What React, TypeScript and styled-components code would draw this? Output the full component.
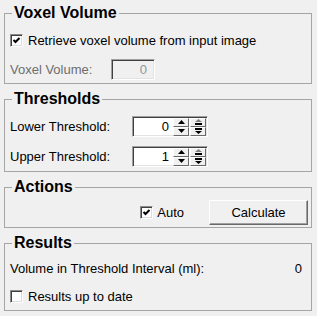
import React from "react";
import styled, { createGlobalStyle } from "styled-components";

const GlobalStyle = createGlobalStyle`
  body {
    margin: 0;
    background: #f0f0f0;
    font-family: "Liberation Sans", Arial, sans-serif;
    font-size: 13px;
    color: #000;
  }
`;

const Panel = styled.div`
  width: 308px;
  padding: 4px 0 0 4px;
  display: flex;
  flex-direction: column;
  gap: 6px;
`;

const Group = styled.fieldset`
  margin: 0;
  padding: 0 3px 0 5px;
  border: 1px solid #a5a5a5;
  min-width: 0;
`;

const Legend = styled.legend`
  margin-left: 2px;
  padding: 0 2px;
  font-weight: bold;
  font-size: 16px;
  line-height: 18px;
`;

const Body = styled.div<{ $top: number; $bottom: number; $gap: number }>`
  display: flex;
  flex-direction: column;
  padding-top: ${(p) => p.$top}px;
  padding-bottom: ${(p) => p.$bottom}px;
  gap: ${(p) => p.$gap}px;
`;

const Row = styled.div<{ $h?: number; $end?: boolean; $right?: number }>`
  display: flex;
  align-items: center;
  height: ${(p) => p.$h ?? 20}px;
  justify-content: ${(p) => (p.$end ? "flex-end" : "flex-start")};
  padding-right: ${(p) => p.$right ?? 0}px;
`;

const Label = styled.span<{ $w?: number; $disabled?: boolean }>`
  width: ${(p) => (p.$w ? `${p.$w}px` : "auto")};
  flex: ${(p) => (p.$w ? "none" : "1")};
  color: ${(p) => (p.$disabled ? "#6d6d6d" : "#000")};
  white-space: nowrap;
`;

const CheckLabel = styled.label<{ $gap?: number }>`
  display: flex;
  align-items: center;
  gap: ${(p) => p.$gap ?? 5}px;
  white-space: nowrap;
`;

const Box = styled.span`
  box-sizing: border-box;
  width: 13px;
  height: 13px;
  background: #fff;
  border: 1px solid;
  border-color: #8a8a8a #fff #fff #8a8a8a;
  box-shadow: inset 1px 1px 0 #404040, inset -1px -1px 0 #dcdcdc;
  display: flex;
  align-items: center;
  justify-content: center;
`;

const CheckBox = ({ checked }: { checked?: boolean }) => (
  <Box>
    {checked && (
      <svg width="9" height="9" viewBox="0 0 9 9">
        <path d="M1.5 4 L3.5 6 L7.5 2" stroke="#000" strokeWidth="2" fill="none" />
      </svg>
    )}
  </Box>
);

const Field = styled.div<{ $w: number; $disabled?: boolean }>`
  box-sizing: border-box;
  width: ${(p) => p.$w}px;
  height: 21px;
  border: 1px solid;
  border-color: #a0a0a0 #fff #fff #a0a0a0;
  box-shadow: inset 1px 1px 0 #404040, inset -1px -1px 0 #e3e3e3;
  background: ${(p) => (p.$disabled ? "#f0f0f0" : "#fff")};
  display: flex;
  align-items: center;
`;

const FieldText = styled.span<{ $disabled?: boolean }>`
  flex: 1;
  text-align: right;
  padding-right: ${(p) => (p.$disabled ? 7 : 4)}px;
  color: ${(p) => (p.$disabled ? "#8d95a0" : "#000")};
`;

const SpinCol = styled.div`
  display: flex;
  flex-direction: column;
  width: 16px;
  margin-right: 1px;
`;

const SpinHalf = styled.div`
  box-sizing: border-box;
  height: 9px;
  background: #f0f0f0;
  border: 1px solid;
  border-color: #fff #696969 #696969 #fff;
  display: flex;
  align-items: center;
  justify-content: center;
`;

const Arrow = ({ dir }: { dir: "up" | "down" }) => (
  <svg width="7" height="4" viewBox="0 0 7 4">
    {dir === "up" ? <path d="M3.5 0 L7 4 L0 4 Z" fill="#000" /> : <path d="M0 0 L7 0 L3.5 4 Z" fill="#000" />}
  </svg>
);

const FastArrow = ({ dir }: { dir: "up" | "down" }) => (
  <svg width="7" height="6" viewBox="0 0 7 6">
    {dir === "up" ? (
      <>
        <path d="M3.5 0 L7 3 L0 3 Z" fill="#808080" />
        <rect x="0" y="4" width="7" height="2" fill="#000" />
      </>
    ) : (
      <>
        <rect x="0" y="0" width="7" height="2" fill="#000" />
        <path d="M0 3 L7 3 L3.5 6 Z" fill="#000" />
      </>
    )}
  </svg>
);

const SpinBox = ({ value }: { value: string }) => (
  <Field $w={76}>
    <FieldText>{value}</FieldText>
    <SpinCol>
      <SpinHalf>
        <Arrow dir="up" />
      </SpinHalf>
      <SpinHalf>
        <Arrow dir="down" />
      </SpinHalf>
    </SpinCol>
    <SpinCol>
      <SpinHalf>
        <FastArrow dir="up" />
      </SpinHalf>
      <SpinHalf>
        <FastArrow dir="down" />
      </SpinHalf>
    </SpinCol>
  </Field>
);

const Button = styled.button`
  box-sizing: border-box;
  width: 99px;
  height: 25px;
  margin-left: 25px;
  font-family: inherit;
  font-size: 13px;
  color: #000;
  background: #f0f0f0;
  border: 1px solid;
  border-color: #fff #696969 #696969 #fff;
  box-shadow: inset -1px -1px 0 #a0a0a0;
  padding: 0;
`;

export default function App() {
  return (
    <>
      <GlobalStyle />
      <Panel>
        <Group>
          <Legend>Voxel Volume</Legend>
          <Body $top={8} $bottom={3} $gap={8}>
            <Row>
              <CheckLabel>
                <CheckBox checked />
                Retrieve voxel volume from input image
              </CheckLabel>
            </Row>
            <Row $h={22}>
              <Label $w={101} $disabled>
                Voxel Volume:
              </Label>
              <Field $w={44} $disabled>
                <FieldText $disabled>0</FieldText>
              </Field>
            </Row>
          </Body>
        </Group>

        <Group>
          <Legend>Thresholds</Legend>
          <Body $top={8} $bottom={4} $gap={9}>
            <Row $h={21}>
              <Label $w={122}>Lower Threshold:</Label>
              <SpinBox value="0" />
            </Row>
            <Row $h={21}>
              <Label $w={122}>Upper Threshold:</Label>
              <SpinBox value="1" />
            </Row>
          </Body>
        </Group>

        <Group>
          <Legend>Actions</Legend>
          <Body $top={4} $bottom={2} $gap={0}>
            <Row $h={25} $end>
              <CheckLabel $gap={4}>
                <CheckBox checked />
                Auto
              </CheckLabel>
              <Button>Calculate</Button>
            </Row>
          </Body>
        </Group>

        <Group>
          <Legend>Results</Legend>
          <Body $top={6} $bottom={4} $gap={8}>
            <Row $right={6}>
              <Label>Volume in Threshold Interval (ml):</Label>
              <span>0</span>
            </Row>
            <Row>
              <CheckLabel>
                <CheckBox />
                Results up to date
              </CheckLabel>
            </Row>
          </Body>
        </Group>
      </Panel>
    </>
  );
}
